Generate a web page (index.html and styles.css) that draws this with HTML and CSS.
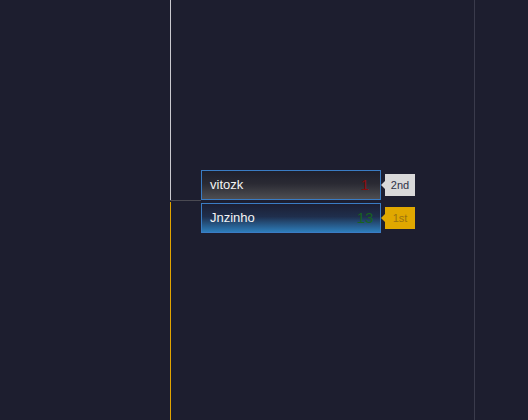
FILE: index.html
```html
<!DOCTYPE html>
<html>
<head>
<meta charset="utf-8">
<link rel="stylesheet" href="styles.css">
</head>
<body>
<div class="bracket">
  <div class="line line-top"></div>
  <div class="line line-join"></div>
  <div class="line line-bottom"></div>
  <div class="line line-right"></div>
  <div class="match">
    <div class="slot">
      <div class="player loser">
        <span class="name">vitozk</span>
        <span class="score red">1</span>
      </div>
      <div class="badge silver">2nd</div>
    </div>
    <div class="slot">
      <div class="player winner">
        <span class="name">Jnzinho</span>
        <span class="score green">13</span>
      </div>
      <div class="badge gold">1st</div>
    </div>
  </div>
</div>
</body>
</html>
```
FILE: styles.css
```css
html, body {
  margin: 0;
  padding: 0;
  background: #1d1e2f;
  font-family: "Liberation Sans", Arial, sans-serif;
}
.bracket {
  position: relative;
  width: 528px;
  height: 420px;
  overflow: hidden;
}
.line {
  position: absolute;
}
.line-top {
  left: 170px;
  top: 0;
  width: 1px;
  height: 200px;
  background: #c9c9cf;
}
.line-join {
  left: 170px;
  top: 200px;
  width: 31px;
  height: 1px;
  background: #4a4a52;
}
.line-bottom {
  left: 170px;
  top: 202px;
  width: 1px;
  height: 218px;
  background: #e0a400;
}
.line-right {
  left: 474px;
  top: 0;
  width: 1px;
  height: 420px;
  background: #3a3b4c;
}
.match {
  display: flex;
  flex-direction: column;
  gap: 3px;
  padding: 170px 0 0 201px;
}
.slot {
  display: flex;
  align-items: center;
  gap: 4px;
}
.player {
  box-sizing: border-box;
  width: 180px;
  height: 30px;
  border: 1px solid #3a7cc4;
  display: flex;
  align-items: center;
  justify-content: space-between;
  padding: 0 4px 2px 8px;
  color: #f4f4f4;
  font-size: 13px;
}
.loser {
  background: linear-gradient(to bottom, #1e1f2c 0%, #2a2a33 45%, #4e4e52 100%);
}
.winner {
  background: linear-gradient(to bottom, #1c1f33 0%, #1f2e4c 45%, #2d7dba 100%);
}
.score {
  width: 22px;
  text-align: center;
  font-size: 15px;
}
.red { color: #8a0c0c; }
.green { color: #17631f; }
.badge {
  position: relative;
  width: 30px;
  height: 22px;
  display: flex;
  align-items: center;
  justify-content: center;
  font-size: 11px;
}
.badge::before {
  content: "";
  position: absolute;
  left: -4px;
  top: 7px;
  border-top: 4px solid transparent;
  border-bottom: 4px solid transparent;
  border-right: 4px solid;
}
.silver {
  background: #d9d9d9;
  color: #2e3145;
}
.silver::before { border-right-color: #d9d9d9; }
.gold {
  background: #e0a800;
  color: #9a7310;
}
.gold::before { border-right-color: #e0a800; }
```
